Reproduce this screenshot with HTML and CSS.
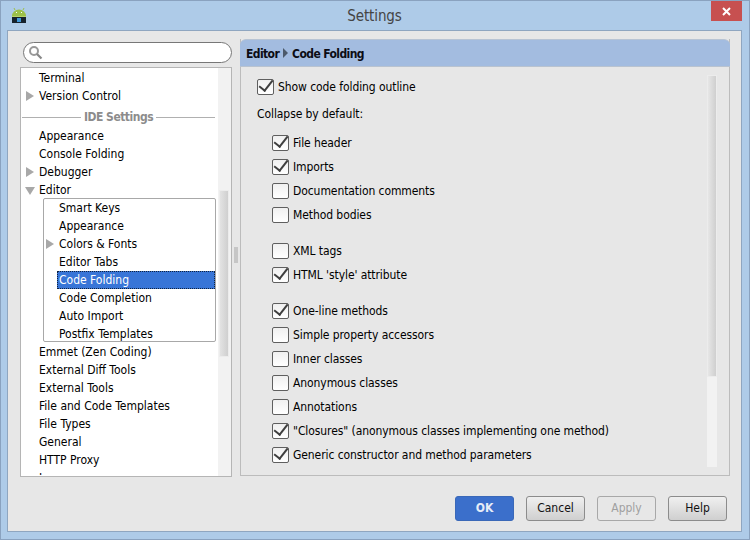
FILE: index.html
```html
<!DOCTYPE html>
<html lang="en">
<head>
<meta charset="utf-8">
<title>Settings</title>
<link rel="stylesheet" href="styles.css">
</head>
<body>
<div class="window">
  <div class="titlebar">
    <svg class="app-icon" width="16" height="16" viewBox="0 0 16 16">
      <path d="M1 9a7 6.500 0 0 1 14 0z" fill="#9cc04a"/>
      <path d="M4 3 3 1M12 3l1-2" stroke="#9cc04a" stroke-width="1"/>
      <rect x="1" y="9" width="14" height="1" fill="#b7d36b"/>
      <rect x="1" y="10" width="14" height="6" fill="#16222c"/>
      <rect x="6" y="11" width="4" height="4" fill="#3f97d8"/>
      <rect x="5" y="5" width="1" height="1" fill="#fff"/>
      <rect x="10" y="5" width="1" height="1" fill="#fff"/>
    </svg>
    <div class="title">Settings</div>
    <div class="close">
      <svg width="9" height="9" viewBox="0 0 9 9"><path d="M1 1l7 7M8 1 1 8" stroke="#fff" stroke-width="2"/></svg>
    </div>
  </div>
  <div class="client">
    <div class="panes">
      <div class="left-pane">
        <div class="search">
          <svg width="15" height="15" viewBox="0 0 15 15"><circle cx="6" cy="6" r="4" fill="none" stroke="#999" stroke-width="2"/><path d="M9 9l4.500 4.500" stroke="#888" stroke-width="2.200"/></svg>
        </div>
        <div class="tree">
          <div class="tree-list">
            <div class="row">Terminal</div>
            <div class="row"><span class="arrow arrow-right"></span>Version Control</div>
            <div class="sep"><span class="line short"></span><span class="sep-text">IDE Settings</span><span class="line"></span></div>
            <div class="row">Appearance</div>
            <div class="row">Console Folding</div>
            <div class="row"><span class="arrow arrow-right"></span>Debugger</div>
            <div class="row"><span class="arrow arrow-down"></span>Editor</div>
            <div class="sub">
              <div class="row">Smart Keys</div>
              <div class="row">Appearance</div>
              <div class="row"><span class="arrow arrow-right"></span>Colors &amp; Fonts</div>
              <div class="row">Editor Tabs</div>
              <div class="row selected">Code Folding</div>
              <div class="row">Code Completion</div>
              <div class="row">Auto Import</div>
              <div class="row">Postfix Templates</div>
            </div>
            <div class="row">Emmet (Zen Coding)</div>
            <div class="row">External Diff Tools</div>
            <div class="row">External Tools</div>
            <div class="row">File and Code Templates</div>
            <div class="row">File Types</div>
            <div class="row">General</div>
            <div class="row">HTTP Proxy</div>
            <div class="row">Images</div>
          </div>
          <div class="tree-scroll"><div class="tree-thumb"></div></div>
        </div>
      </div>
      <div class="splitter"><div class="grip"></div></div>
      <div class="right-pane">
        <div class="crumb">Editor<span class="crumb-arrow"></span>Code Folding</div>
        <div class="body">
          <div class="options">
            <label class="check top on">Show code folding outline</label>
            <div class="caption">Collapse by default:</div>
            <div class="group">
              <label class="check on">File header</label>
              <label class="check on">Imports</label>
              <label class="check">Documentation comments</label>
              <label class="check">Method bodies</label>
            </div>
            <div class="group">
              <label class="check">XML tags</label>
              <label class="check on">HTML 'style' attribute</label>
            </div>
            <div class="group">
              <label class="check on">One-line methods</label>
              <label class="check">Simple property accessors</label>
              <label class="check">Inner classes</label>
              <label class="check">Anonymous classes</label>
              <label class="check">Annotations</label>
              <label class="check on">"Closures" (anonymous classes implementing one method)</label>
              <label class="check on">Generic constructor and method parameters</label>
            </div>
          </div>
          <div class="body-scroll"><div class="body-thumb"></div></div>
        </div>
      </div>
    </div>
    <div class="buttons">
      <div class="btn primary">OK</div>
      <div class="btn">Cancel</div>
      <div class="btn disabled">Apply</div>
      <div class="btn">Help</div>
    </div>
  </div>
</div>
</body>
</html>
```
FILE: styles.css
```css
* { box-sizing: border-box; }
html, body { margin: 0; padding: 0; }
body {
  width: 750px; height: 540px; overflow: hidden;
  font-family: "DejaVu Sans Condensed", "DejaVu Sans", sans-serif;
  font-size: 12px; color: #000;
}
.window {
  width: 750px; height: 540px;
  background: #aecbe8;
  border: 1px solid #8aa2bf;
  padding: 0 7px 7px 6px;
  display: flex; flex-direction: column;
}
.titlebar { height: 29px; display: flex; align-items: center; position: relative; flex: none; }
.app-icon { margin: 0 0 0 4px; flex: none; position: relative; top: -1px; }
.title {
  position: absolute; left: 0; right: 0; top: 5px;
  text-align: center; font-size: 15px; line-height: 20px; color: #444; letter-spacing: -0.1px;
}
.close {
  position: absolute; right: 0; top: 0;
  width: 31px; height: 20px; background: #c75050;
  display: flex; align-items: center; justify-content: center;
}
.client {
  flex: 1; background: #e7e7e7; border: 1px solid #8fa6c0;
  padding: 8px 11px 0 12px;
  display: flex; flex-direction: column;
}
.panes { display: flex; height: 437px; flex: none; }
.left-pane { width: 212px; display: flex; flex-direction: column; flex: none; padding-top: 3px; }
.search {
  width: 209px; height: 21px; margin-left: 3px;
  background: #fff; border: 1px solid #777; border-radius: 11px;
  padding: 2px 0 0 4px; flex: none;
}
.search svg { display: block; }
.tree {
  margin-top: 4px; height: 410px; flex: none;
  background: #fff; border: 1px solid #b5b5b5;
  display: flex; overflow: hidden;
}
.tree-list { flex: 1; min-width: 0; overflow: hidden; padding-top: 1px; margin-bottom: 1px; }
.tree-scroll { width: 13px; flex: none; background: #f2f2f2; padding: 122px 1px 0 1px; }
.tree-thumb {
  width: 10px; height: 167px;
  background: linear-gradient(90deg, #e3e3e3, #cfcfcf);
  border: 1px solid #ececec;
}
.row {
  height: 18px; line-height: 18px; padding-left: 18px;
  position: relative; white-space: nowrap;
}
.arrow { position: absolute; width: 0; height: 0; border-style: solid; border-color: transparent; }
.arrow-right { left: 5px; top: 4px; border-width: 5px 0 5px 8px; border-left-color: #a8a8a8; }
.arrow-down { left: 4px; top: 6px; border-width: 8px 5px 0 5px; border-top-color: #a8a8a8; }
.sep { height: 22px; display: flex; align-items: center; padding: 3px 3px 1px 1px; }
.line { flex: 1; height: 1px; background: #b0b0b0; }
.line.short { flex: none; width: 59px; }
.sep-text { padding: 0 3px; font-weight: bold; color: #8c8c8c; letter-spacing: -0.5px; }
.sub {
  margin: -1px 0 1px 22px; width: 173px; height: 144px;
  border: 1px solid #a8a8a8; border-radius: 2px;
}
.sub .row { padding-left: 15px; }
.sub .arrow-right { left: 2px; }
.sub .row.selected {
  margin-left: 13px; padding-left: 2px;
  background: #3875d7; color: #fff;
  outline: 1px dotted #10223f; outline-offset: -1px;
}
.splitter {
  width: 8px; flex: none; display: flex; align-items: center; justify-content: center;
}
.grip {
  width: 4px; height: 16px; margin-top: -6px;
  background-image: radial-gradient(#c4c4c4 0.7px, transparent 0.8px);
  background-size: 2px 2px;
}
.right-pane {
  width: 490px; flex: none; border: 1px solid #bcbcbc; border-top: 0;
  display: flex; flex-direction: column;
}
.crumb {
  height: 28px; flex: none; margin: 0 -1px;
  background: #a3bce0; border-radius: 6px 6px 0 0;
  border-top: 1px solid #b8c4d4; border-bottom: 1px solid #b9c3d0;
  font-weight: bold; line-height: 28px; padding-left: 6px; color: #0c0c14;
  letter-spacing: -0.6px;
}
.crumb-arrow {
  display: inline-block; width: 0; height: 0; margin: 0 4px 0 4px;
  border-style: solid; border-width: 5px 0 5px 5px;
  border-color: transparent transparent transparent #4d5a6a;
}
.body { flex: 1; display: flex; min-height: 0; overflow: hidden; }
.options { width: 466px; flex: none; padding: 8px 0 0 16px; overflow: hidden; letter-spacing: -0.08px; }
.check {
  display: flex; align-items: center; height: 24px; padding-left: 36px;
  position: relative; white-space: nowrap;
}
.check::before {
  content: ""; position: absolute; left: 15px; top: 4px;
  width: 15px; height: 14px; border: 1px solid #5f5f5f; border-radius: 2px;
  background: linear-gradient(#f0f0f0, #fff);
}
.check.on::after {
  content: ""; position: absolute; left: 20px; top: 2px;
  width: 6px; height: 12px; border: solid #3f3f3f; border-width: 0 2px 2px 0;
  transform: rotate(38deg);
}
.check.top { padding-left: 21px; }
.check.top::before { left: 0; }
.check.top.on::after { left: 5px; }
.caption { height: 26px; line-height: 30px; margin-bottom: 6px; }
.group { margin-bottom: 12px; }
.body-scroll { width: 10px; margin-top: 8px; height: 392px; background: #f2f2f2; }
.body-thumb {
  width: 10px; height: 302px;
  background: linear-gradient(90deg, #e6e6e6, #cfcfcf);
  border: 1px solid #ececec;
}
.buttons {
  display: flex; justify-content: flex-end; gap: 12px;
  padding: 20px 0 0 0; margin-right: 3px;
}
.btn {
  width: 59px; height: 25px; line-height: 23px; text-align: center;
  border: 1px solid #8c8c8c; border-radius: 3px;
  background: linear-gradient(#f0f0f0, #cfcfcf); color: #111;
}
.btn.primary {
  background: #3b6fcb; border-color: #3a68b8; color: #e6ecf7; font-weight: bold;
}
.btn.disabled {
  background: #e7e7e7; border-color: #a8a8a8; color: #a0a0a0;
}
```
